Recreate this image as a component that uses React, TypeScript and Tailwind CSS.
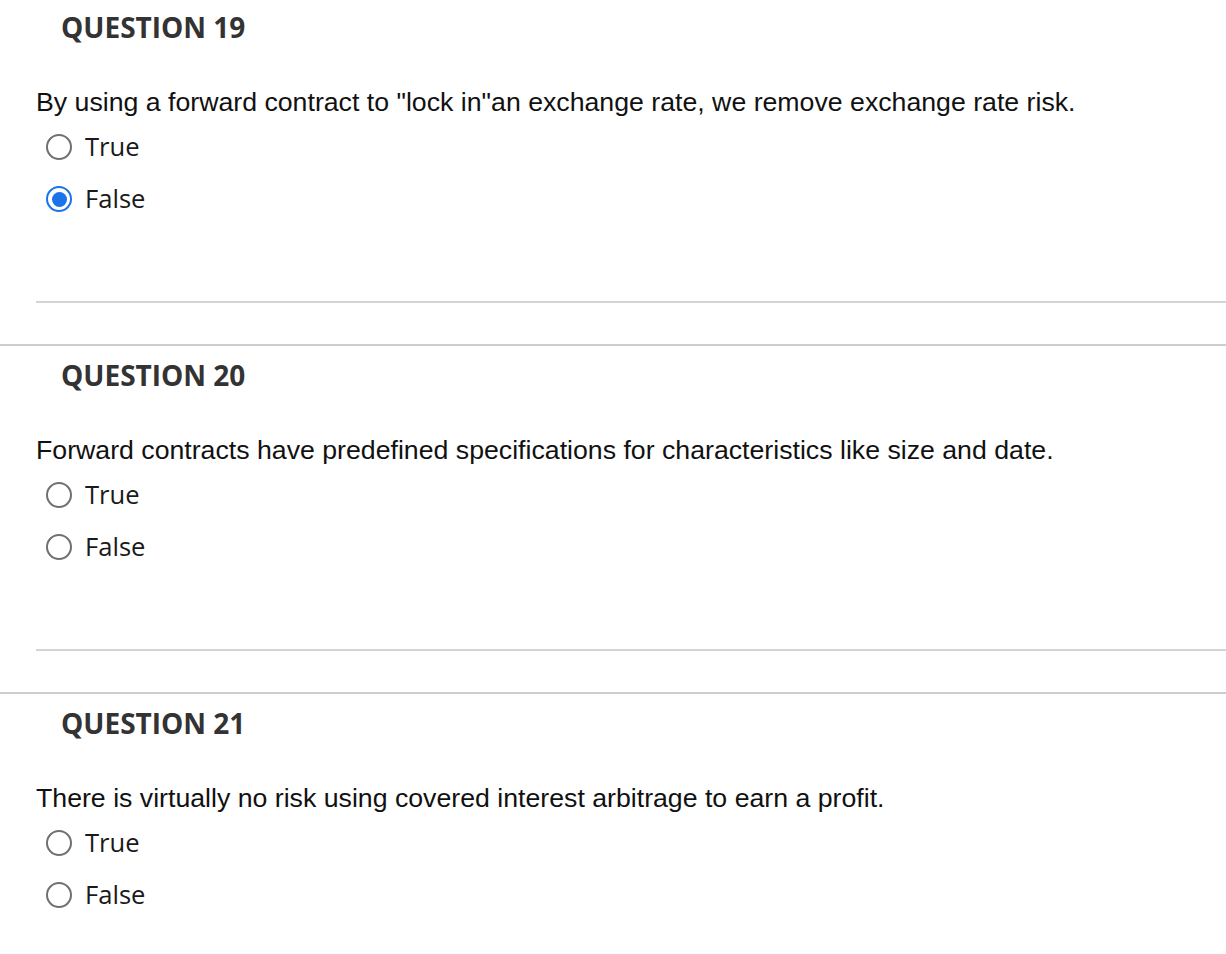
import React from 'react';

const questions = [
  {
    num: 19,
    text: 'By using a forward contract to "lock in"an exchange rate, we remove exchange rate risk.',
    answer: 'False',
  },
  {
    num: 20,
    text: 'Forward contracts have predefined specifications for characteristics like size and date.',
    answer: '',
  },
  {
    num: 21,
    text: 'There is virtually no risk using covered interest arbitrage to earn a profit.',
    answer: '',
  },
];

function Radio({ checked }: { checked: boolean }) {
  if (checked) {
    return (
      <span className="w-[26px] h-[26px] rounded-full border-2 border-[#1a73e8] flex items-center justify-center shrink-0">
        <span className="w-[15px] h-[15px] rounded-full bg-[#1a73e8]" />
      </span>
    );
  }
  return <span className="w-[26px] h-[26px] rounded-full border-2 border-[#707070] shrink-0" />;
}

export default function App() {
  return (
    <div className="w-[1226px] h-[954px] overflow-hidden bg-white">
      {questions.map((q, i) => (
        <div
          key={q.num}
          className={`flex flex-col ${i === 0 ? '-mt-[2px]' : ''} ${
            i < questions.length - 1 ? 'border-b-2 border-[#cdcdcd]' : ''
          }`}
        >
          <div className="h-[58px] flex items-center pl-[61px]">
            <h2
              className="text-[#333333] font-bold text-[28px] leading-none"
              style={{ fontFamily: '"Open Sans", sans-serif' }}
            >
              QUESTION {q.num}
            </h2>
          </div>
          <p
            className="mt-[31px] h-[30px] pl-[36px] flex items-center text-[26.7px] text-[#111111] whitespace-nowrap"
            style={{ fontFamily: '"Liberation Sans", Arial, sans-serif' }}
          >
            {q.text}
          </p>
          <div className="mt-[4px] flex flex-col">
            {['True', 'False'].map((opt) => (
              <label key={opt} className="h-[52px] pl-[46px] flex items-center gap-[13px]">
                <Radio checked={q.answer === opt} />
                <span
                  className="text-[25.6px] text-[#1a1a1a]"
                  style={{ fontFamily: '"Open Sans", sans-serif' }}
                >
                  {opt}
                </span>
              </label>
            ))}
          </div>
          {i < questions.length - 1 && (
            <div className="mt-[76px] ml-[36px] mb-[41px] border-t-2 border-[#d4d4d4]" />
          )}
        </div>
      ))}
    </div>
  );
}
